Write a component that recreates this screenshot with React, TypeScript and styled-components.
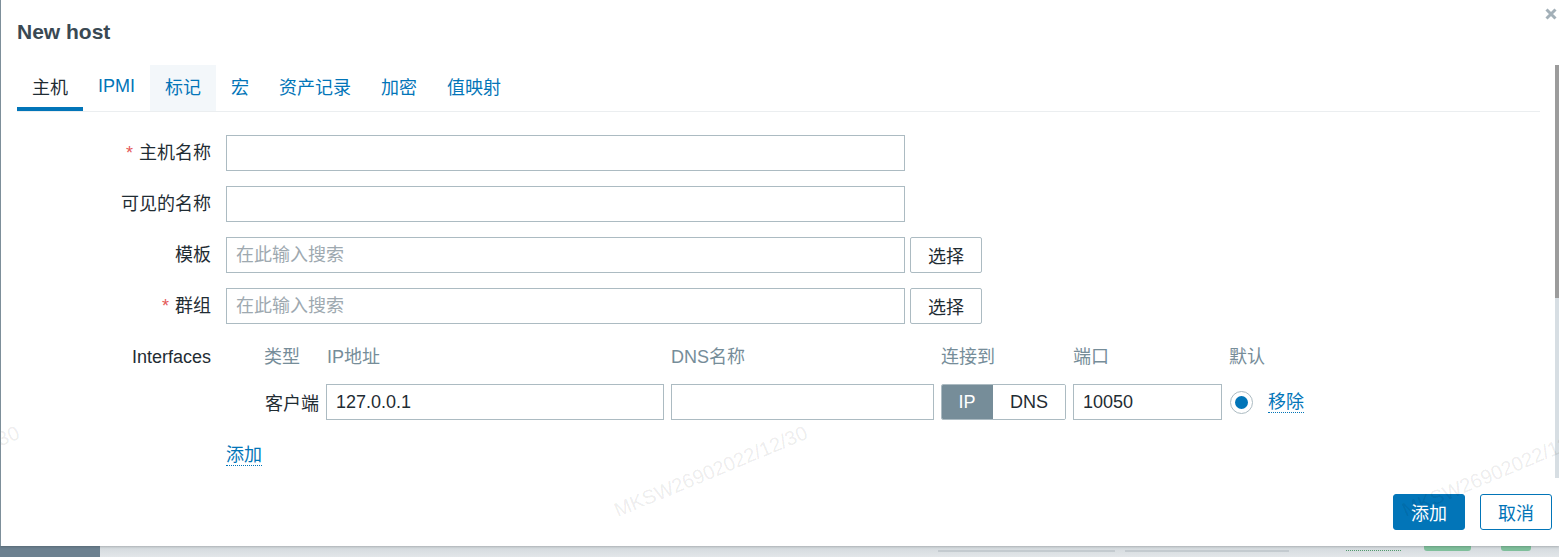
import React from "react";
import styled, { createGlobalStyle } from "styled-components";

const FONT = `"Liberation Sans", "Noto Sans CJK SC", sans-serif`;

const GlobalStyle = createGlobalStyle`
    html, body {
        margin: 0;
        padding: 0;
    }
    body {
        font-family: ${FONT};
        background: #dfe3e6;
        color: #1f2c33;
    }
    * {
        box-sizing: border-box;
    }
`

const Page = styled.div`
    width: 1559px;
    height: 557px;
    display: flex;
    flex-direction: column;
    overflow: hidden;
`
const Dialog = styled.div`
    position: relative;
    flex: none;
    height: 546px;
    display: flex;
    flex-direction: column;
    background: #ffffff;
    border-left: 1px solid #7d8f9a;
    box-shadow: 0 1px 2px rgba(0, 0, 0, 0.18);
    overflow: hidden;
`
const Head = styled.div`
    flex: none;
    height: 65px;
    padding: 20px 0 0 16px;
`
const Title = styled.h4`
    margin: 0;
    font-size: 21px;
    line-height: 24px;
    font-weight: bold;
    color: #3a4953;
`
const CloseButton = styled.button`
    position: absolute;
    top: 8px;
    right: 2px;
    width: 12px;
    height: 12px;
    padding: 0;
    border: none;
    background: none;
    display: flex;
`
const Body = styled.div`
    position: relative;
    flex: none;
    height: 413px;
    padding: 0 19px 0 16px;
`
const ScrollTrack = styled.div`
    position: absolute;
    top: 0;
    right: 0;
    bottom: 0;
    width: 4px;
    background: #d7dee3;
`
const ScrollThumb = styled.div`
    height: 233px;
    background: #9c9c9c;
`
const TabBar = styled.div`
    display: flex;
    border-bottom: 1px solid #ebeef0;
`
const Tab = styled.div<{ $active?: boolean; $hover?: boolean }>`
    height: 46px;
    padding: 0 15px;
    display: flex;
    align-items: center;
    font-size: 18px;
    color: ${p => (p.$active ? "#1f2c33" : "#0275b8")};
    background: ${p => (p.$hover ? "#f3f7fa" : "transparent")};
    border-bottom: 4px solid ${p => (p.$active ? "#0275b8" : "transparent")};
`
const FormGrid = styled.div`
    margin-top: 23px;
    display: grid;
    grid-template-columns: 194px auto;
    column-gap: 15px;
    row-gap: 15px;
    align-items: center;
`
const Label = styled.div<{ $top?: boolean }>`
    text-align: right;
    font-size: 18px;
    line-height: 20px;
    color: #1f2c33;
    align-self: ${p => (p.$top ? "start" : "center")};
    padding-top: ${p => (p.$top ? "8px" : "0")};
`
const Asterisk = styled.span`
    color: #e45959;
    margin-right: 6px;
`
const FieldRow = styled.div`
    display: flex;
    gap: 5px;
`
const TextInput = styled.input<{ $width?: number }>`
    width: ${p => (p.$width ? `${p.$width}px` : "100%")};
    height: 36px;
    padding: 0 9px;
    border: 1px solid #acbbc2;
    border-radius: 0;
    background: #ffffff;
    font-family: ${FONT};
    font-size: 18px;
    color: #1f2c33;
    outline: none;
    &::placeholder {
        color: #9ea9b0;
    }
`
const SelectButton = styled.button`
    width: 72px;
    height: 36px;
    border: 1px solid #acbbc2;
    border-radius: 2px;
    background: #ffffff;
    font-family: ${FONT};
    font-size: 18px;
    color: #1f2c33;
    padding: 0;
`
const InterfaceTable = styled.div`
    padding-top: 8px;
    display: grid;
    grid-template-columns: 93px 338px 263px 125px 149px 32px auto;
    column-gap: 7px;
    row-gap: 17px;
    align-items: center;
`
const ColHead = styled.div<{ $indent?: number }>`
    font-size: 18px;
    line-height: 20px;
    color: #768d99;
    white-space: nowrap;
    padding-left: ${p => p.$indent ?? 0}px;
`
const TypeCell = styled.div`
    text-align: right;
    font-size: 18px;
    color: #1f2c33;
`
const Toggle = styled.div`
    display: flex;
    height: 36px;
    border: 1px solid #acbbc2;
    border-radius: 2px;
    overflow: hidden;
`
const ToggleOption = styled.div<{ $checked?: boolean }>`
    display: flex;
    align-items: center;
    justify-content: center;
    width: ${p => (p.$checked ? "52px" : "auto")};
    flex: ${p => (p.$checked ? "none" : "1")};
    margin: ${p => (p.$checked ? "-1px 0 -1px -1px" : "0")};
    background: ${p => (p.$checked ? "#768d99" : "#ffffff")};
    color: ${p => (p.$checked ? "#ffffff" : "#1f2c33")};
    font-size: 18px;
`
const Radio = styled.div`
    width: 23px;
    height: 23px;
    margin-left: 1px;
    border: 1px solid #acbbc2;
    border-radius: 50%;
    display: flex;
    align-items: center;
    justify-content: center;
    &::after {
        content: "";
        width: 13px;
        height: 13px;
        border-radius: 50%;
        background: #0275b8;
    }
`
const LinkCell = styled.div`
    display: flex;
`
const Link = styled.span`
    font-size: 18px;
    line-height: 20px;
    color: #0275b8;
    border-bottom: 1px dotted #0275b8;
`
const AddRow = styled.div`
    grid-column: 2;
    padding-top: 10px;
    display: flex;
`
const Footer = styled.div`
    flex: 1;
    display: flex;
    justify-content: flex-end;
    align-items: flex-start;
    gap: 15px;
    padding: 16px 7px 0 0;
`
const FooterButton = styled.button<{ $primary?: boolean }>`
    width: 72px;
    height: 36px;
    padding: 0;
    border: 1px solid #0275b8;
    border-radius: 3px;
    background: ${p => (p.$primary ? "#0275b8" : "#ffffff")};
    color: ${p => (p.$primary ? "#ffffff" : "#0275b8")};
    font-family: ${FONT};
    font-size: 18px;
`
const Watermark = styled.span<{ $left: number }>`
    position: absolute;
    left: ${p => p.$left}px;
    top: 500px;
    font-family: "Liberation Sans", sans-serif;
    font-size: 20px;
    line-height: 20px;
    white-space: nowrap;
    color: rgba(0, 0, 0, 0.085);
    transform: rotate(-22.5deg);
    transform-origin: 0 100%;
    pointer-events: none;
`
const Backdrop = styled.div`
    flex: 1;
    display: flex;
`
const Sidebar = styled.div`
    width: 100px;
    background: #6c8190;
`
const BackContent = styled.div`
    flex: 1;
    display: flex;
    align-items: flex-start;
    padding-left: 838px;
    background: linear-gradient(#d2d8dc, #e2e6e9);
`
const BackLine = styled.div<{ $width: number; $gap: number }>`
    width: ${p => p.$width}px;
    margin: 4px ${p => p.$gap}px 0 0;
    height: 2px;
    background: #c3cacf;
`
const BackDotted = styled.div`
    width: 55px;
    margin: 4px 23px 0 0;
    border-bottom: 1px dotted #4f9a6c;
`
const BackGreen = styled.div<{ $width: number; $gap: number }>`
    width: ${p => p.$width}px;
    height: 5px;
    margin-right: ${p => p.$gap}px;
    border-radius: 0 0 3px 3px;
    background: #7fbf9b;
`

const tabs = ["主机", "IPMI", "标记", "宏", "资产记录", "加密", "值映射"]

const App = () => {
    return (
        <Page>
            <GlobalStyle />
            <Dialog>
                <Head>
                    <Title>New host</Title>
                </Head>
                <CloseButton aria-label="Close">
                    <svg width="12" height="12" viewBox="0 0 12 12">
                        <path d="M1.5 1.5 L10.5 10.5 M10.5 1.5 L1.5 10.5" stroke="#a3b0b8" strokeWidth="3" />
                    </svg>
                </CloseButton>
                <Body>
                    <TabBar>
                        {tabs.map((t, i) => (
                            <Tab key={t} $active={i === 0} $hover={i === 2}>{t}</Tab>
                        ))}
                    </TabBar>
                    <FormGrid>
                        <Label><Asterisk>*</Asterisk>主机名称</Label>
                        <FieldRow><TextInput $width={679} /></FieldRow>

                        <Label>可见的名称</Label>
                        <FieldRow><TextInput $width={679} /></FieldRow>

                        <Label>模板</Label>
                        <FieldRow>
                            <TextInput $width={679} placeholder="在此输入搜索" />
                            <SelectButton>选择</SelectButton>
                        </FieldRow>

                        <Label><Asterisk>*</Asterisk>群组</Label>
                        <FieldRow>
                            <TextInput $width={679} placeholder="在此输入搜索" />
                            <SelectButton>选择</SelectButton>
                        </FieldRow>

                        <Label $top>Interfaces</Label>
                        <InterfaceTable>
                            <ColHead $indent={38}>类型</ColHead>
                            <ColHead $indent={1}>IP地址</ColHead>
                            <ColHead>DNS名称</ColHead>
                            <ColHead>连接到</ColHead>
                            <ColHead>端口</ColHead>
                            <ColHead>默认</ColHead>
                            <div />

                            <TypeCell>客户端</TypeCell>
                            <TextInput defaultValue="127.0.0.1" />
                            <TextInput />
                            <Toggle>
                                <ToggleOption $checked>IP</ToggleOption>
                                <ToggleOption>DNS</ToggleOption>
                            </Toggle>
                            <TextInput defaultValue="10050" />
                            <Radio />
                            <LinkCell><Link>移除</Link></LinkCell>
                        </InterfaceTable>

                        <AddRow><Link>添加</Link></AddRow>
                    </FormGrid>
                    <ScrollTrack>
                        <ScrollThumb />
                    </ScrollTrack>
                </Body>
                <Footer>
                    <FooterButton $primary>添加</FooterButton>
                    <FooterButton>取消</FooterButton>
                </Footer>
                {[-170, 618, 1406].map(x => (
                    <Watermark key={x} $left={x}>MKSW26902022/12/30</Watermark>
                ))}
            </Dialog>
            <Backdrop>
                <Sidebar />
                <BackContent>
                    <BackLine $width={177} $gap={10} />
                    <BackLine $width={164} $gap={57} />
                    <BackDotted />
                    <BackGreen $width={47} $gap={30} />
                    <BackGreen $width={30} $gap={0} />
                </BackContent>
            </Backdrop>
        </Page>
    )
}

export default App
